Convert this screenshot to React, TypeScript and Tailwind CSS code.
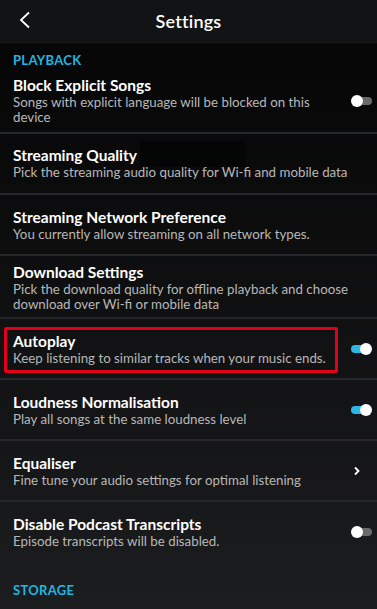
import React from 'react';

type Row = {
  title: string;
  sub: string;
  control?: 'on' | 'off' | 'chevron';
  pad?: string;
};

const Toggle: React.FC<{ on: boolean }> = ({ on }) => (
  <div className="relative w-[21px] h-[12px] shrink-0">
    <div
      className={
        on
          ? 'absolute left-0 right-[2px] top-[2px] h-[8px] rounded-full bg-[#2fb6e6]'
          : 'absolute left-[2px] right-0 top-[2px] h-[8px] rounded-full bg-[#6a6a6a]'
      }
    />
    <div
      className={
        on
          ? 'absolute right-0 top-0 w-[12px] h-[12px] rounded-full bg-white'
          : 'absolute left-0 top-0 w-[12px] h-[12px] rounded-full bg-white'
      }
    />
  </div>
);

const Chevron: React.FC = () => (
  <svg width="8" height="10" viewBox="0 0 8 10" className="shrink-0 mr-[11px]">
    <path d="M2 1.5 L5.5 5 L2 8.5" stroke="white" strokeWidth="1.8" fill="none" />
  </svg>
);

const SettingRow: React.FC<Row & { children?: React.ReactNode; last?: boolean }> = ({
  title,
  sub,
  control,
  pad,
  children,
  last,
}) => (
  <div
    className={`relative flex items-center justify-between pl-[13px] pr-[5px] ${pad ?? 'pt-[13px] pb-[12px]'} ${
      last ? '' : 'border-b-2 border-[#26272a]'
    }`}
  >
    {children}
    <div className={control ? 'flex-1 pr-[18px]' : 'flex-1 pr-[8px]'}>
      <div className="text-[15.5px] leading-[18px] font-bold text-white">{title}</div>
      <div className="text-[13.3px] leading-[15px] text-[#b8b8b8] mt-[1px]">{sub}</div>
    </div>
    {control === 'on' && <Toggle on />}
    {control === 'off' && <Toggle on={false} />}
    {control === 'chevron' && <Chevron />}
  </div>
);

export default function App() {
  return (
    <div
      className="w-[377px] h-[609px] overflow-hidden bg-gradient-to-b from-[#050505] to-[#1c1d1f] text-white"
      style={{ fontFamily: 'Lato, "Open Sans", sans-serif' }}
    >
      {/* Header */}
      <div className="relative h-[43px] bg-[#121315] flex items-center justify-center border-b border-[#1a1b1d]">
        <svg
          width="14"
          height="18"
          viewBox="0 0 14 18"
          className="absolute left-[18px] top-[11px]"
        >
          <path d="M11 1.5 L3 9 L11 16.5" stroke="white" strokeWidth="1.8" fill="none" />
        </svg>
        <span className="text-[18px] font-semibold tracking-[0.2px]">Settings</span>
      </div>

      <div className="pl-[13px] mt-[10px] text-[13px] leading-[14px] font-bold text-[#22b6e0] tracking-[0.3px]">
        PLAYBACK
      </div>

      <SettingRow
        title="Block Explicit Songs"
        sub="Songs with explicit language will be blocked on this device"
        control="off"
        pad="pt-[9px] pb-[7px]"
      />
      <SettingRow
        title="Streaming Quality"
        sub="Pick the streaming audio quality for Wi-fi and mobile data"
        pad="pt-[12px] pb-[13px]"
      >
        <div className="absolute left-[140px] top-[7px] w-[106px] h-[26px] bg-black/50" />
      </SettingRow>
      <SettingRow
        title="Streaming Network Preference"
        sub="You currently allow streaming on all network types."
      />
      <SettingRow
        title="Download Settings"
        sub="Pick the download quality for offline playback and choose download over Wi-fi or mobile data"
        pad="pt-[7px] pb-[5px]"
      />
      <SettingRow
        title="Autoplay"
        sub="Keep listening to similar tracks when your music ends."
        control="on"
      >
        <div className="absolute left-[4px] top-[8px] w-[334px] h-[46px] border-[3px] border-[#e2001a] rounded-[2px]" />
      </SettingRow>
      <SettingRow
        title="Loudness Normalisation"
        sub="Play all songs at the same loudness level"
        control="on"
      />
      <SettingRow
        title="Equaliser"
        sub="Fine tune your audio settings for optimal listening"
        control="chevron"
      />
      <SettingRow
        title="Disable Podcast Transcripts"
        sub="Episode transcripts will be disabled."
        control="off"
        last
      />

      <div className="pl-[13px] mt-[22px] text-[13px] leading-[14px] font-bold text-[#22b6e0] tracking-[0.3px]">
        STORAGE
      </div>
    </div>
  );
}
